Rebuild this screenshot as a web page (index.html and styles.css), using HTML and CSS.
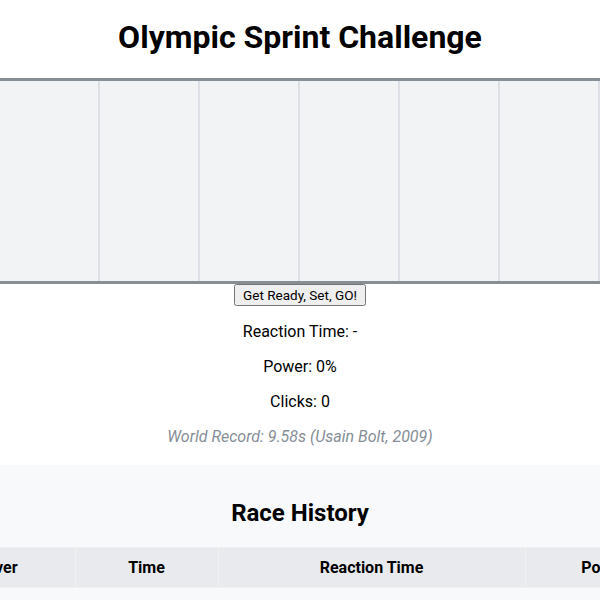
FILE: index.html
```html
<!DOCTYPE html>
<html>
<head>
  <title>Olympic Sprint Challenge</title>
  <link rel="stylesheet" href="styles.css">
</head>
<body>
  <h1 class="heading">Olympic Sprint Challenge</h1>
  <div class="track-wrap">
    <div class="track">
      <div class="lane"></div>
      <div class="lane"></div>
      <div class="lane"></div>
      <div class="lane"></div>
      <div class="lane"></div>
      <div class="lane"></div>
      <div class="lane"></div>
      <div class="lane"></div>
    </div>
  </div>
  <button class="start">Get Ready, Set, GO!</button>
  <p class="stat">Reaction Time: -</p>
  <p class="stat">Power: 0%</p>
  <p class="stat">Clicks: 0</p>
  <p class="record">World Record: 9.58s (Usain Bolt, 2009)</p>
  <div class="history">
    <h2 class="history-title">Race History</h2>
    <div class="table-wrap">
      <table class="history-table">
        <colgroup>
          <col class="col-racer">
          <col class="col-time">
          <col class="col-reaction">
          <col class="col-power">
        </colgroup>
        <thead>
          <tr>
            <th>Driver</th>
            <th>Time</th>
            <th>Reaction Time</th>
            <th>Power</th>
          </tr>
        </thead>
        <tbody></tbody>
      </table>
    </div>
  </div>
</body>
</html>
```

FILE: styles.css
```css
html, body {
  overflow: hidden;
  margin: 0;
  padding: 0;
  background-color: white;
  font-family: Roboto, "Liberation Sans", sans-serif;
  color: black;
}
.heading {
  text-align: center;
  font-size: 32px;
  font-weight: bold;
  margin: 18px 0 22px;
}
.track-wrap {
  display: flex;
  justify-content: center;
}
.track {
  display: flex;
  flex-shrink: 0;
  width: 800px;
  height: 200px;
  background-color: #f1f3f5;
  border-top: 3px solid #868e96;
  border-bottom: 3px solid #868e96;
}
.lane {
  box-sizing: border-box;
  width: 100px;
  height: 100%;
  border-right: 2px solid #dcdfe3;
}
.start {
  display: block;
  margin: 0 auto;
  font-family: Roboto, "Liberation Sans", sans-serif;
  font-size: 13.5px;
  padding: 1px 7px;
}
.stat {
  text-align: center;
  font-size: 16px;
  margin: 16px 0;
}
.record {
  text-align: center;
  font-size: 16px;
  font-style: italic;
  color: #868e96;
  margin: 16px 0 19px;
}
.history {
  background-color: #f8f9fa;
  padding: 14px 0 20px;
}
.history-title {
  text-align: center;
  font-size: 24px;
  margin: 20px 0;
}
.table-wrap {
  display: flex;
  justify-content: center;
}
.history-table {
  flex-shrink: 0;
  width: 766px;
  table-layout: fixed;
  border-collapse: collapse;
}
.col-racer { width: 158px; }
.col-time { width: 143px; }
.col-reaction { width: 307px; }
.col-power { width: 158px; }
.history-table th {
  background-color: #e9eaed;
  font-size: 16px;
  padding: 10px 8px;
  border: 1px solid #eef0f2;
}
```
